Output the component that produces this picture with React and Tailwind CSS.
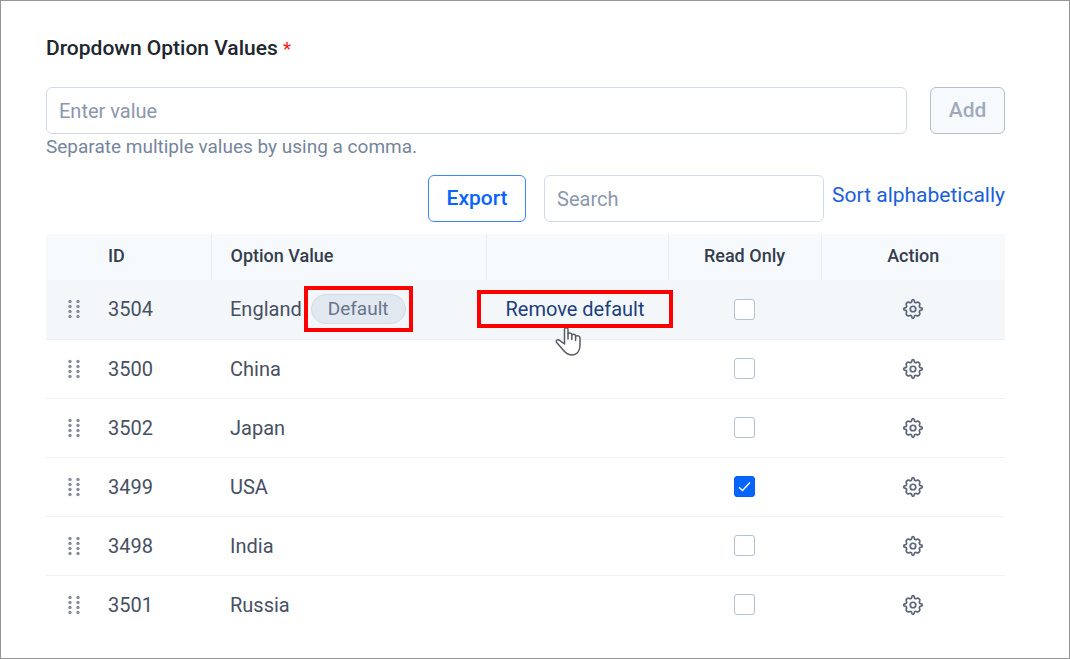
import React, { useState } from "react";

const initialOptions = [
  { id: 3504, value: "England", readOnly: false, isDefault: true },
  { id: 3500, value: "China", readOnly: false },
  { id: 3502, value: "Japan", readOnly: false },
  { id: 3499, value: "USA", readOnly: true },
  { id: 3498, value: "India", readOnly: false },
  { id: 3501, value: "Russia", readOnly: false },
];

const DragHandle = () => (
  <svg width="14" height="20" viewBox="0 0 14 20" fill="#868c99">
    {[2, 7, 12, 17].map((y) => (
      <React.Fragment key={y}>
        <circle cx="3" cy={y + 0.5} r="1.7" />
        <circle cx="11" cy={y + 0.5} r="1.7" />
      </React.Fragment>
    ))}
  </svg>
);

const GearIcon = () => (
  <svg
    width="22"
    height="22"
    viewBox="0 0 24 24"
    fill="none"
    stroke="#5c6779"
    strokeWidth="1.9"
    strokeLinejoin="round"
  >
    <circle cx="12" cy="12" r="3" />
    <path d="M19.3 10.3C18.8 9.4 18.6 8.6 19.3 7.600 20.2 6.100 17.900 3.800 16.400 4.700 15.400 5.400 14.600 5.200 13.700 4.700 13.300 3.600 13.500 1.800 12 1.800S10.700 3.600 10.300 4.700C9.400 5.200 8.600 5.400 7.600 4.700 6.100 3.800 3.800 6.100 4.700 7.600 5.400 8.600 5.200 9.400 4.700 10.300 3.600 10.700 1.800 10.500 1.800 12S3.600 13.300 4.700 13.700C5.200 14.600 5.400 15.400 4.700 16.400 3.800 17.900 6.100 20.200 7.600 19.300 8.600 18.600 9.400 18.800 10.300 19.300 10.700 20.400 10.500 22.200 12 22.200S13.300 20.400 13.700 19.300C14.600 18.800 15.400 18.600 16.400 19.300 17.900 20.200 20.200 17.900 19.300 16.400 18.600 15.400 18.800 14.600 19.300 13.700 20.400 13.300 22.200 13.500 22.200 12S20.400 10.700 19.300 10.300Z" />
  </svg>
);

const HandPointer = () => (
  <svg
    width="28"
    height="30"
    viewBox="0 0 28 30"
    fill="#fff"
    stroke="#565b66"
    strokeWidth="1.5"
    strokeLinecap="round"
    strokeLinejoin="round"
  >
    <path d="M9.5 17V2.5C9.5.3 13 .3 13 2.5V7C13.5 5.500 16.500 5.600 16.800 7.500V8C17.500 6.700 20.300 6.900 20.600 8.800V9.300C22 8 25 8.800 25 11V18C25 24 22 28 16.500 28C12.500 28 10.200 25.800 7.500 22.300L1.700 15.500C.3 13.400 2.800 12 4.600 13.400Z" />
    <path d="M13 7V12M16.800 8V12.500M20.600 9V13.500" fill="none" />
  </svg>
);

const ReadOnlyBox = ({ option, onToggle }) => (
  <span className="grid justify-center">
    <input
      type="checkbox"
      aria-label={`Read only ${option.value}`}
      checked={option.readOnly}
      onChange={() => onToggle(option.id)}
      className="peer col-start-1 row-start-1 size-[21px] appearance-none rounded-[3px] border border-[#b6c1d0] bg-white checked:border-[#0b5cf0] checked:bg-[#0665ff]"
    />
    <svg
      viewBox="0 0 21 21"
      className="pointer-events-none invisible col-start-1 row-start-1 size-[21px] peer-checked:visible"
      fill="none"
      stroke="#fff"
      strokeWidth="1.5"
    >
      <path d="M5 11.200 8.500 14.500 16 6.500" />
    </svg>
  </span>
);

const OptionRow = ({ option, onToggle, onRemoveDefault }) => (
  <tr
    className={
      option.isDefault
        ? "h-[59px] border-b border-[#ebf0f4] bg-[#f3f7fa]"
        : "h-[59px] border-b border-[#eef2f6] last:border-b-0"
    }
  >
    <td className="pl-[21px]">
      <DragHandle />
    </td>
    <td>{option.id}</td>
    <td className="pl-[19px]">
      <div className="flex items-center gap-0.5">
        <span>{option.value}</span>
        {option.isDefault && (
          <span className="flex border-4 border-[#ff0000] px-[3px] py-1">
            <span className="rounded-full border border-[#d3dae5] bg-[#e2e8f0] px-4 text-[19px] leading-7 text-[#68758a]">
              Default
            </span>
          </span>
        )}
      </div>
    </td>
    <td className="pr-1 text-center">
      {option.isDefault && (
        <button
          type="button"
          onClick={() => onRemoveDefault(option.id)}
          className="relative cursor-pointer text-[#1d3f7e]"
        >
          Remove default
          <span className="absolute top-full left-[50px] z-10 pt-1">
            <HandPointer />
          </span>
          <span className="absolute -inset-x-7 -inset-y-[5px] z-20 border-4 border-[#ff0000]" />
        </button>
      )}
    </td>
    <td>
      <ReadOnlyBox option={option} onToggle={onToggle} />
    </td>
    <td>
      <button
        type="button"
        aria-label={`Actions for ${option.value}`}
        className="mx-auto flex cursor-pointer"
      >
        <GearIcon />
      </button>
    </td>
  </tr>
);

export default function App() {
  const [options, setOptions] = useState(initialOptions);
  const [search, setSearch] = useState("");

  const toggleReadOnly = (id) =>
    setOptions((prev) =>
      prev.map((o) => (o.id === id ? { ...o, readOnly: !o.readOnly } : o))
    );

  const removeDefault = (id) =>
    setOptions((prev) =>
      prev.map((o) => (o.id === id ? { ...o, isDefault: false } : o))
    );

  const sortOptions = (e) => {
    e.preventDefault();
    setOptions((prev) =>
      [...prev].sort((a, b) => a.value.localeCompare(b.value))
    );
  };

  const visible = options.filter((o) =>
    o.value.toLowerCase().includes(search.toLowerCase())
  );

  return (
    <div className="min-h-screen border border-[#969696] bg-white pt-8 pr-16 pl-[45px] font-['Roboto',sans-serif] text-xl text-[#475063]">
      {/* New value */}
      <label
        htmlFor="option-value"
        className="block text-[21px] leading-[30px] font-medium text-[#20262e]"
      >
        Dropdown Option Values{" "}
        <span className="text-lg text-[#f5281e]">*</span>
      </label>
      <div className="mt-6 flex gap-[23px]">
        <input
          id="option-value"
          type="text"
          placeholder="Enter value"
          className="h-[47px] min-w-0 flex-1 rounded-md border border-[#d3dae7] px-3 placeholder:text-[#8a97ad]"
        />
        <button
          type="button"
          disabled
          className="h-[47px] w-[75px] rounded-md border border-[#b4bece] bg-[#f7fafc] text-[21px] font-medium text-[#a0aabc]"
        >
          Add
        </button>
      </div>
      <p className="text-[19px] leading-[26px] text-[#76859c]">
        Separate multiple values by using a comma.
      </p>

      {/* Toolbar */}
      <div className="mt-[15px] flex items-start justify-end">
        <button
          type="button"
          className="h-[47px] w-[98px] cursor-pointer rounded-md border border-[#3d85ff] text-[21px] font-medium text-[#0b63ff]"
        >
          Export
        </button>
        <input
          type="search"
          aria-label="Search options"
          placeholder="Search"
          value={search}
          onChange={(e) => setSearch(e.target.value)}
          className="ml-[18px] h-[47px] w-[280px] rounded-md border border-[#d3dae7] px-3 placeholder:text-[#8a97ad]"
        />
        <a
          href="#sort"
          onClick={sortOptions}
          className="ml-2 text-[21px] leading-10 text-[#1a60dc]"
        >
          Sort alphabetically
        </a>
      </div>

      {/* Options */}
      <table className="mt-3 w-full table-fixed border-collapse text-left">
        <colgroup>
          <col className="w-[62px]" />
          <col className="w-[103px]" />
          <col className="w-[275px]" />
          <col className="w-[182px]" />
          <col className="w-[153px]" />
          <col className="w-[184px]" />
        </colgroup>
        <thead>
          <tr className="h-[46px] bg-[#f7fafd] text-lg text-[#343d4d] [&>th]:pb-[3px] [&>th]:font-medium">
            <th></th>
            <th className="border-r border-[#e8eef4]">ID</th>
            <th className="border-r border-[#e8eef4] pl-[19px]">
              Option Value
            </th>
            <th className="border-r border-[#e8eef4]"></th>
            <th className="border-r border-[#e8eef4] text-center">
              Read Only
            </th>
            <th className="text-center">Action</th>
          </tr>
        </thead>
        <tbody>
          {visible.map((option) => (
            <OptionRow
              key={option.id}
              option={option}
              onToggle={toggleReadOnly}
              onRemoveDefault={removeDefault}
            />
          ))}
        </tbody>
      </table>
    </div>
  );
}
